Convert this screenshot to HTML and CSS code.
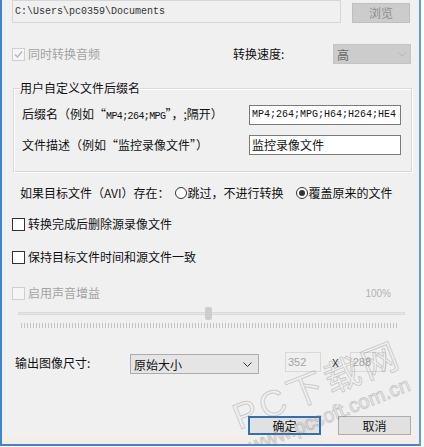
FILE: index.html
```html
<!DOCTYPE html>
<html lang="zh-CN">
<head>
<meta charset="utf-8">
<title>设置</title>
<link rel="stylesheet" href="styles.css">
</head>
<body>
<div class="window">
  <div class="row path-row">
    <div class="path-input">C:\Users\pc0359\Documents</div>
    <div class="btn btn-disabled browse">浏览</div>
  </div>

  <div class="row speed-row">
    <div class="check-item disabled">
      <span class="box box-disabled">
        <svg width="11" height="11" viewBox="0 0 11 11"><polyline points="2,5.5 4.5,8 9,2.5" fill="none" stroke="#b5b5b5" stroke-width="1.3"/></svg>
      </span>
      <span class="lbl">同时转换音频</span>
    </div>
    <div class="speed-label">转换速度:</div>
    <div class="select select-disabled">
      <span>高</span>
      <svg width="8" height="5" viewBox="0 0 8 5"><polyline points="0.5,0.5 4,4 7.5,0.5" fill="none" stroke="#b8b8b8" stroke-width="1"/></svg>
    </div>
  </div>

  <fieldset class="group">
    <legend>用户自定义文件后缀名</legend>
    <div class="group-row">
      <span class="lbl">后缀名（例如“<span class="mono-inline">MP4;264;MPG</span>”，;隔开）</span>
      <div class="text-input mono">MP4;264;MPG;H64;H264;HE4</div>
    </div>
    <div class="group-row">
      <span class="lbl">文件描述（例如“监控录像文件”）</span>
      <div class="text-input">监控录像文件</div>
    </div>
  </fieldset>

  <div class="row radio-row">
    <span class="lbl">如果目标文件（AVI）存在：</span>
    <span class="radio"></span><span class="lbl">跳过，不进行转换</span>
    <span class="radio checked"><span class="dot"></span></span><span class="lbl">覆盖原来的文件</span>
  </div>

  <div class="row check-row r1">
    <span class="box"></span><span class="lbl">转换完成后删除源录像文件</span>
  </div>
  <div class="row check-row r2">
    <span class="box"></span><span class="lbl">保持目标文件时间和源文件一致</span>
  </div>
  <div class="row check-row r3">
    <div class="check-item disabled">
      <span class="box box-disabled"></span><span class="lbl">启用声音增益</span>
    </div>
    <span class="percent">100%</span>
  </div>

  <div class="slider">
    <div class="track-wrap">
      <div class="track"></div>
      <div class="thumb"></div>
    </div>
    <div class="ticks"></div>
  </div>

  <div class="row size-row">
    <span class="lbl size-label">输出图像尺寸:</span>
    <div class="select size-select">
      <span>原始大小</span>
      <svg width="9" height="5" viewBox="0 0 9 5"><polyline points="0.5,0.5 4.5,4.5 8.5,0.5" fill="none" stroke="#333" stroke-width="1"/></svg>
    </div>
    <div class="num-input">352</div>
    <span class="times">X</span>
    <div class="num-input">288</div>
  </div>

  <div class="row button-row">
    <div class="btn btn-default">确定</div>
    <div class="btn">取消</div>
  </div>

  <div class="watermark">
    <div class="wm-big">PC下载网</div>
    <div class="wm-small">www.pcsoft.com.cn</div>
  </div>
</div>
</body>
</html>
```

FILE: styles.css
```css
html, body {
  margin: 0;
  padding: 0;
  background: #ffffff;
}

body {
  width: 424px;
  height: 447px;
  overflow: hidden;
  font-family: "Noto Sans CJK SC", "Noto Sans", sans-serif;
  font-size: 12px;
  color: #111;
}

.window {
  position: relative;
  box-sizing: border-box;
  width: 421px;
  height: 446px;
  border-left: 2px solid #3a86d4;
  border-right: 2px solid #5b9be0;
  border-bottom: 2px solid #3a86d4;
  padding: 0 8px 0 10px;
  background: linear-gradient(to top, #f6eee6 0, #f6eee6 7px, #f0f0f0 7px);
  display: flex;
  flex-direction: column;
  overflow: hidden;
}

.row {
  display: flex;
  align-items: center;
}

.lbl {
  line-height: 16px;
  white-space: nowrap;
}

/* path row */
.path-row {
  align-items: flex-start;
  gap: 11px;
  height: 23px;
}

.path-input {
  box-sizing: border-box;
  width: 329px;
  height: 23px;
  border: 1px solid #d6d6d6;
  background: #f0f0f0;
  font-family: "Liberation Mono", monospace;
  font-size: 10px;
  line-height: 21px;
  padding-left: 2px;
  color: #333;
  white-space: nowrap;
}

.btn {
  box-sizing: border-box;
  width: 73px;
  height: 19px;
  border: 1px solid #adadad;
  background: #e1e1e1;
  text-align: center;
  line-height: 17px;
  color: #111;
}

.btn-disabled {
  background: #cccccc;
  border-color: #bfbfbf;
  color: #8c8c8c;
}

.browse {
  width: 58px;
  height: 20px;
  margin-top: 3px;
  line-height: 18px;
}

/* speed row */
.speed-row {
  margin-top: 21px;
  height: 20px;
}

.check-item {
  display: flex;
  align-items: center;
}

.box {
  box-sizing: border-box;
  width: 13px;
  height: 13px;
  border: 1px solid #333;
  background: #ffffff;
  margin-right: 3px;
  display: flex;
  align-items: center;
  justify-content: center;
  flex: none;
}

.box-disabled {
  border-color: #cfcfcf;
  background: #f5f5f5;
}

.disabled .lbl {
  color: #a3a3a3;
}

.speed-label {
  margin-left: 133px;
  line-height: 16px;
}

.select {
  box-sizing: border-box;
  height: 20px;
  border: 1px solid #acacac;
  background: #e5e5e5;
  display: flex;
  align-items: center;
  justify-content: space-between;
  padding: 0 6px 0 3px;
}

.select-disabled {
  width: 78px;
  margin-left: auto;
  border-color: #c4c4c4;
  background: #cccccc;
  color: #666;
  padding-right: 4px;
}

/* group */
.group {
  margin: 16px -1px 0 1px;
  padding: 9px 9px 16px 8px;
  border: 1px solid #d9d9d9;
  box-shadow: inset 1px 1px 0 #ffffff, 1px 1px 0 #ffffff;
  display: flex;
  flex-direction: column;
  gap: 10px;
  min-width: 0;
}

.group legend {
  padding: 0;
  margin-left: -2px;
  line-height: 16px;
}

.group-row {
  display: grid;
  grid-template-columns: 227px 152px;
  align-items: center;
}

.mono-inline {
  font-family: "Liberation Mono", monospace;
  font-size: 10px;
  letter-spacing: -0.6px;
}

.text-input {
  box-sizing: border-box;
  width: 152px;
  height: 20px;
  border: 1px solid #7a7a7a;
  background: #ffffff;
  padding-left: 2px;
  line-height: 18px;
  white-space: nowrap;
  overflow: hidden;
}

.text-input.mono {
  font-family: "Liberation Mono", monospace;
  font-size: 10px;
}

/* radio row */
.radio-row {
  margin-top: 13px;
  padding-left: 8px;
  height: 16px;
}

.radio {
  box-sizing: border-box;
  width: 12px;
  height: 12px;
  border: 1px solid #333;
  border-radius: 50%;
  background: #fff;
  margin-left: 5px;
  margin-right: 1px;
  display: flex;
  align-items: center;
  justify-content: center;
  flex: none;
}

.radio.checked {
  margin-left: 12px;
}

.radio .dot {
  width: 6px;
  height: 6px;
  border-radius: 50%;
  background: #333;
}

/* checkbox rows */
.check-row {
  height: 16px;
}

.r1 { margin-top: 15px; }
.r2 { margin-top: 17px; }
.r3 { margin-top: 20px; }

.percent {
  margin-left: auto;
  margin-right: 20px;
  font-family: "Liberation Sans", sans-serif;
  font-size: 10px;
  color: #b0b0b0;
}

/* slider */
.slider {
  margin: 6px 0 0 6px;
  width: 387px;
}

.track-wrap {
  position: relative;
  height: 13px;
  display: flex;
  align-items: center;
}

.track {
  width: 100%;
  height: 3px;
  box-sizing: border-box;
  border: 1px solid #dadada;
  background: #e7e7e7;
}

.thumb {
  position: absolute;
  left: 187px;
  top: 0;
  width: 7px;
  height: 13px;
  border-radius: 2px;
  background: #cdcdcd;
}

.ticks {
  margin: 3px 0 0 3px;
  width: 378px;
  height: 5px;
  background: repeating-linear-gradient(to right, #c4c4c4 0, #c4c4c4 1px, transparent 1px, transparent 3px);
}

/* size row */
.size-row {
  margin-top: 24px;
  height: 22px;
  align-items: flex-start;
}

.size-label {
  padding-left: 3px;
  width: 115px;
  line-height: 22px;
}

.size-select {
  width: 129px;
  margin-top: 2px;
  padding-right: 6px;
}

.num-input {
  box-sizing: border-box;
  width: 36px;
  height: 20px;
  border: 1px solid #d9d9d9;
  background: #f0f0f0;
  color: #a3a3a3;
  font-family: "Liberation Sans", sans-serif;
  font-size: 11px;
  line-height: 18px;
  padding-left: 2px;
  margin-left: 26px;
}

.times {
  margin-left: 11px;
  margin-right: 11px;
  font-family: "Liberation Sans", sans-serif;
  font-size: 10px;
  line-height: 24px;
  color: #222;
}

.times + .num-input {
  margin-left: 0;
}

/* buttons */
.button-row {
  margin-top: 42px;
  justify-content: flex-end;
  gap: 17px;
}

.btn-default {
  border: 2px solid #2f6fb3;
  line-height: 15px;
}

/* watermark overlay */
.watermark {
  position: absolute;
  left: 237px;
  top: 398px;
  width: 200px;
  transform: rotate(-21.5deg);
  transform-origin: 0 32px;
  pointer-events: none;
  font-family: "Liberation Sans", "Noto Sans CJK SC", sans-serif;
  color: transparent;
  -webkit-text-stroke: 1px rgba(120, 120, 120, 0.33);
}

.wm-big {
  font-size: 36px;
  line-height: 40px;
  letter-spacing: 4px;
  white-space: nowrap;
}

.wm-small {
  font-size: 20px;
  line-height: 22px;
  margin-left: 4px;
  white-space: nowrap;
}
```
